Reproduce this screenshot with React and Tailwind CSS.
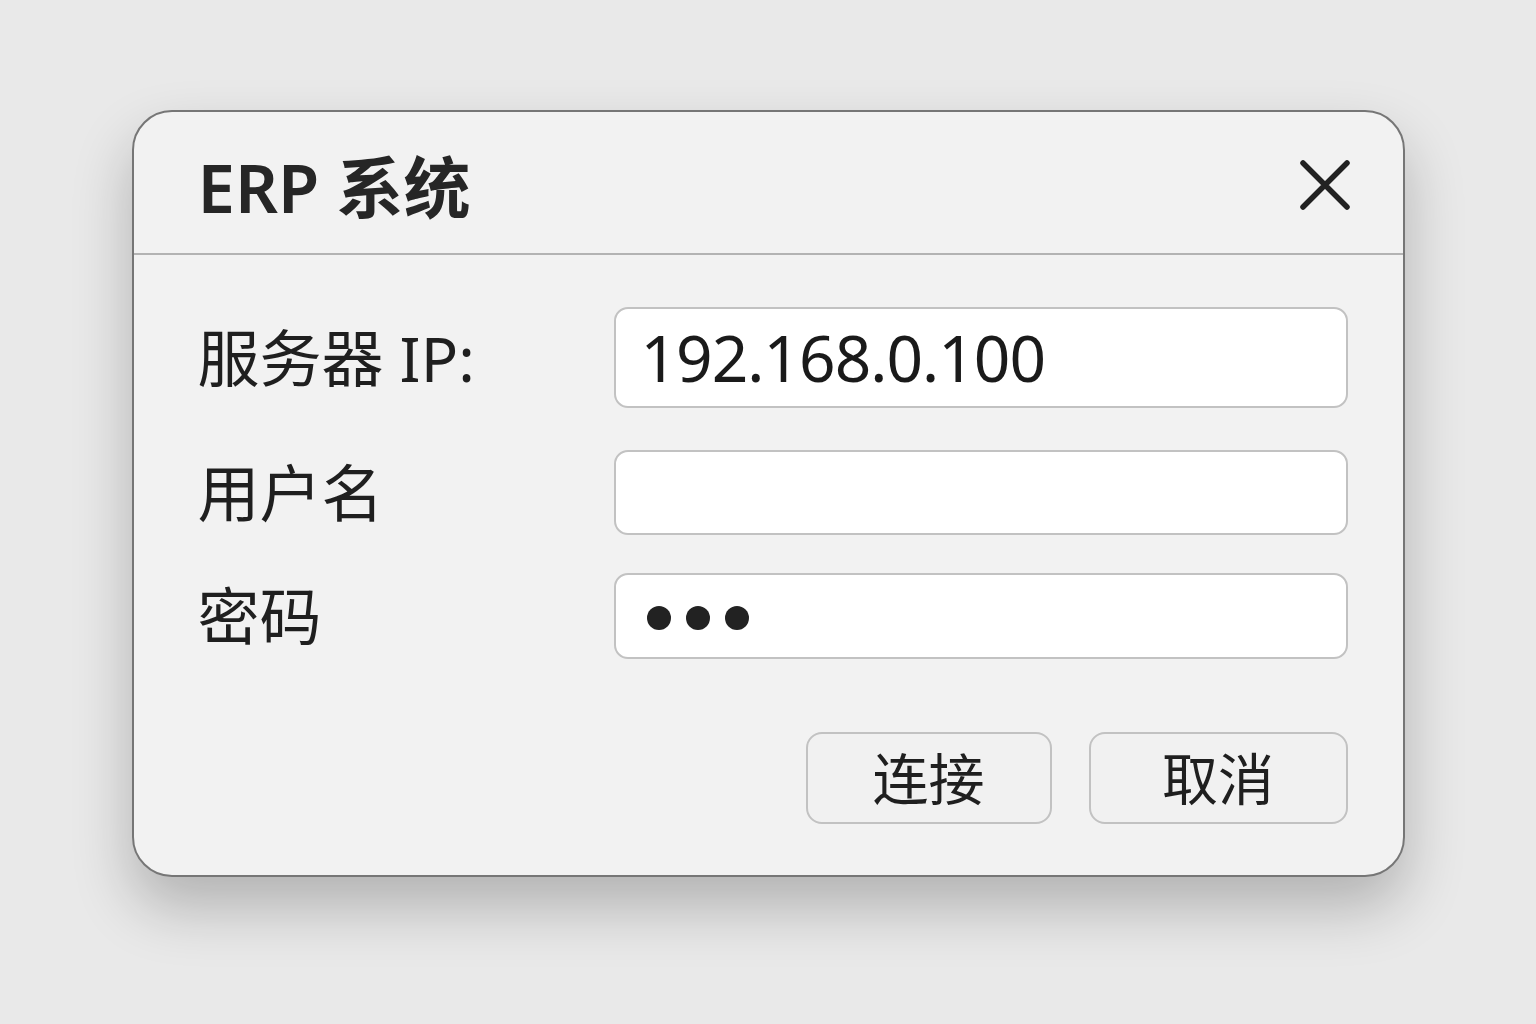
import React from "react";

const font = { fontFamily: '"Noto Sans", "Noto Sans CJK SC", sans-serif' };

const Field = ({ label, height, children }) => (
  <div className="flex items-center">
    <div className="w-[416px] shrink-0 text-[62px] leading-none text-[#1f1f1f]">
      {label}
    </div>
    <div
      className={`flex-1 flex items-center bg-white border-2 border-[#c2c2c2] rounded-[14px] px-[25px] ${height}`}
    >
      {children}
    </div>
  </div>
);

const App = () => {
  return (
    <div className="min-h-screen w-full bg-[#e9e9e9] pt-[110px]" style={font}>
      <div className="mx-auto w-[1273px] h-[767px] bg-[#f2f2f2] border-2 border-[#767676] rounded-[40px] shadow-[0_30px_60px_rgba(0,0,0,0.24)] flex flex-col overflow-hidden">
        <div className="h-[143px] shrink-0 flex items-center justify-between pl-[64px] pr-[52px] border-b-2 border-[#b3b3b3]">
          <h1 className="text-[67px] font-semibold leading-none text-[#262626] mt-[10px]">
            ERP 系统
          </h1>
          <button className="mt-[4px] text-[#222]">
            <svg width="52" height="52" viewBox="0 0 52 52" fill="none">
              <path
                d="M4 4 L48 48 M48 4 L4 48"
                stroke="currentColor"
                strokeWidth="5.5"
                strokeLinecap="round"
              />
            </svg>
          </button>
        </div>

        <div className="flex-1 flex flex-col pl-[64px] pr-[55px] pt-[52px]">
          <Field label="服务器 IP:" height="h-[101px]">
            <span className="text-[64px] leading-none text-[#1a1a1a] tracking-[-1px]">
              192.168.0.100
            </span>
          </Field>
          <div className="h-[42px]" />
          <Field label="用户名" height="h-[85px]" />
          <div className="h-[38px]" />
          <Field label="密码" height="h-[86px]">
            <div className="flex items-center gap-[15px] ml-[6px] mt-[4px]">
              <span className="w-[24px] h-[24px] rounded-full bg-[#222]" />
              <span className="w-[24px] h-[24px] rounded-full bg-[#222]" />
              <span className="w-[24px] h-[24px] rounded-full bg-[#222]" />
            </div>
          </Field>

          <div className="flex justify-end gap-[37px] mt-[73px]">
            <button className="w-[246px] h-[92px] rounded-[16px] border-2 border-[#c2c2c2] bg-[#f1f1f1] text-[56px] leading-none text-[#1f1f1f]">
              连接
            </button>
            <button className="w-[259px] h-[92px] rounded-[16px] border-2 border-[#c2c2c2] bg-[#f1f1f1] text-[56px] leading-none text-[#1f1f1f]">
              取消
            </button>
          </div>
        </div>
      </div>
    </div>
  );
};

export default App;
